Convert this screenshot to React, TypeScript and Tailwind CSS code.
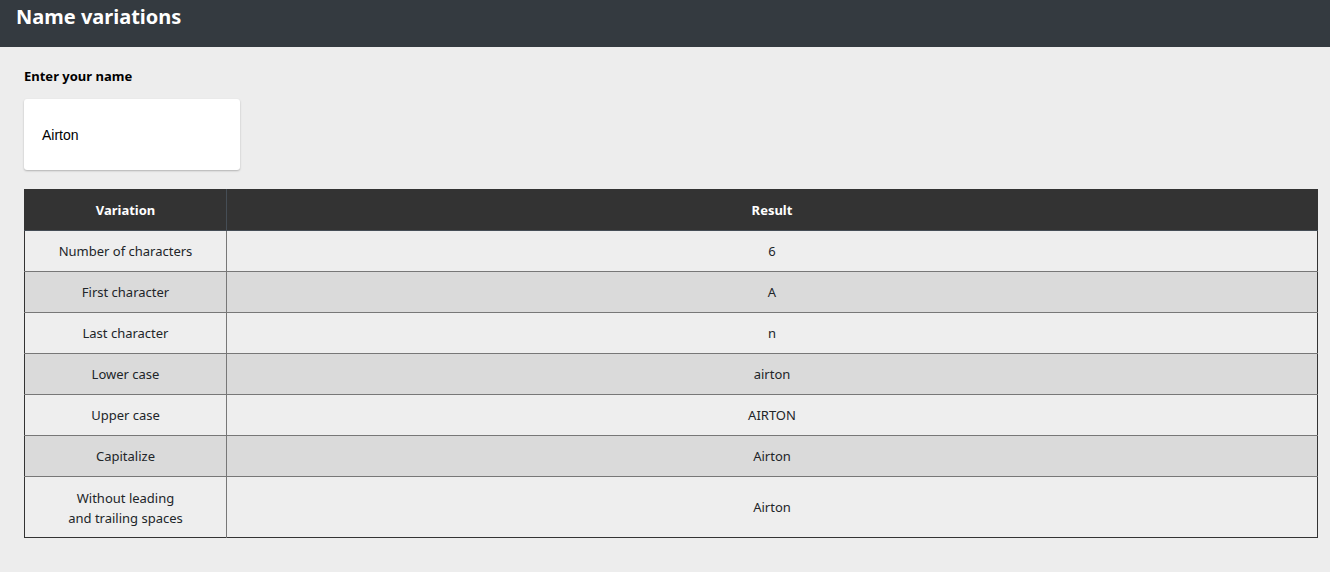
const rows: [string, string][] = [
  ["Number of characters", "6"],
  ["First character", "A"],
  ["Last character", "n"],
  ["Lower case", "airton"],
  ["Upper case", "AIRTON"],
  ["Capitalize", "Airton"],
];

export default function App() {
  return (
    <div className="min-h-screen bg-[#ededed] font-['Noto_Sans',sans-serif] text-[#212529]">
      <header className="h-[47px] bg-[#343a40] pl-4 pt-[3px]">
        <h1 className="text-[20px] font-bold leading-7 text-white">Name variations</h1>
      </header>

      <main className="pl-6 pr-3 pt-[20px]">
        <label className="block text-[13px] font-bold leading-[18px] text-black">Enter your name</label>
        <div className="mt-[14px] flex h-[71px] w-[216px] items-center rounded-[3px] bg-white pl-[18px] pt-[2px] shadow-[0_1px_2px_rgba(0,0,0,0.25)]">
          <span className="font-['Liberation_Sans',Arial,sans-serif] text-[14px] text-black">Airton</span>
        </div>

        <table className="mt-[19px] w-full border-collapse border border-[#333] text-center text-[13px]">
          <thead>
            <tr className="h-[41px] bg-[#333] text-white">
              <th className="w-[202px] border-r border-b border-[#454d55] pt-[2px] font-bold">Variation</th>
              <th className="border-b border-[#454d55] pt-[2px] font-bold">Result</th>
            </tr>
          </thead>
          <tbody>
            {rows.map(([label, value], i) => (
              <tr key={label} className={`h-[41px] ${i % 2 ? "bg-[#dadada]" : "bg-[#eeeeee]"}`}>
                <td className="border-r border-b border-[#777] pt-[2px]">{label}</td>
                <td className="border-b border-[#777] pt-[2px]">{value}</td>
              </tr>
            ))}
            <tr className="h-[61px] bg-[#eeeeee]">
              <td className="border-r border-[#777] pt-[1px] leading-5">
                Without leading
                <br />
                and trailing spaces
              </td>
              <td className="pt-[1px]">Airton</td>
            </tr>
          </tbody>
        </table>
      </main>
    </div>
  );
}
